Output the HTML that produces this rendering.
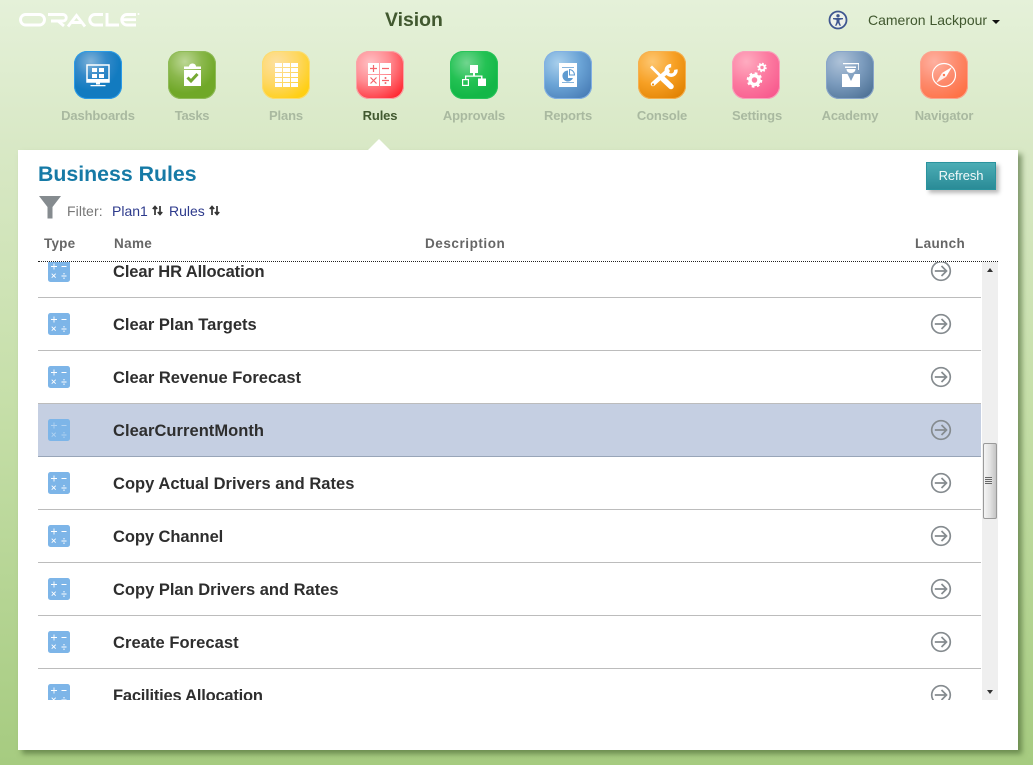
<!DOCTYPE html>
<html><head><meta charset="utf-8">
<style>
html,body{margin:0;padding:0}
body{width:1033px;height:765px;overflow:hidden;position:relative;font-family:"Liberation Sans",Arial,sans-serif;background:linear-gradient(#e5f1d9 0,#d8e8c5 150px,#c6dfa9 400px,#a6cb80 765px)}
.abs{position:absolute;white-space:nowrap}
.ic{position:absolute;top:51px;width:48px;height:48px;border-radius:13px;overflow:hidden}
.ic svg{position:absolute;left:0;top:0}
.lb{position:absolute;top:108px;width:94px;text-align:center;font-size:13px;font-weight:bold;color:#a9b9a0;letter-spacing:-.15px;line-height:15px}
#panel{position:absolute;left:18px;top:150px;width:1000px;height:600px;background:#fff;box-shadow:4px 4px 5px rgba(60,90,40,.55)}
.th{position:absolute;top:236px;font-size:13.5px;font-weight:bold;color:#666;line-height:15px;letter-spacing:.2px}
#clip{position:absolute;left:38px;top:262px;width:944px;height:438px;overflow:hidden}
.row{position:absolute;left:0;width:943px;height:52px;border-bottom:1px solid #bcbcbc}
.row.sel{background:#c5cfe2;border-bottom-color:#98a5b8}
.row .n{position:absolute;left:75px;top:17px;font-size:16.500px;font-weight:bold;color:#2e2e2e;line-height:20px;letter-spacing:0;white-space:nowrap}
.row svg.t{position:absolute;left:10px;top:15px}
.row svg.a{position:absolute;left:892px;top:15px}
</style></head>
<body>
<svg class="abs" style="left:19px;top:12px" width="122" height="16" viewBox="0 0 122 16">
<g fill="none" stroke="#fff" stroke-width="2.900">
<rect x="1.500" y="2.500" width="24" height="10.500" rx="5.200"/>
<path d="M29 2.500H44a3 3 0 0 1 0 6.500H32M39 9l6 5"/>
<path d="M49 14.500L57.500 3.500l8.500 11M53 10.500h9"/>
<path d="M84 2.500H76a5.200 5.200 0 0 0 0 10.500h8"/>
<path d="M88 1V13H100"/>
<path d="M117 2.500H108a5.200 5.200 0 0 0 0 10.500h9M104 7.700h13"/>
</g>
<circle cx="119.500" cy="2" r="1" fill="#fff"/>
</svg>
<div class="abs" style="left:385px;top:9px;font-size:19.400px;font-weight:bold;color:#41582f;line-height:23px">Vision</div>
<svg class="abs" style="left:828px;top:10px" width="20" height="20" viewBox="0 0 20 20">
<circle cx="10" cy="10" r="8.500" fill="#eef2ea" stroke="#3f5790" stroke-width="1.800"/>
<circle cx="10" cy="5.800" r="1.700" fill="#3f5790"/>
<path d="M5 8h10v1.300l-3.500.6V12l1.500 3.800h-1.500L10 12.800 8.500 15.800H7L8.500 12V9.900L5 9.300z" fill="#3f5790"/>
</svg>
<div class="abs" style="left:868px;top:12px;font-size:14px;color:#41582f;line-height:16px">Cameron Lackpour</div>
<div class="abs" style="left:992px;top:20px;width:0;height:0;border:4px solid transparent;border-top:4px solid #111;border-bottom:0"></div>

<!-- Dashboards -->
<div class="ic" style="left:74px;background:radial-gradient(circle at 35% 22%,#7fb2d8 0,#3389c9 32%,#127bc0 60%);box-shadow:inset 0 0 0 1px #2a9be8">
<svg width="48" height="48"><rect x="13" y="14" width="22" height="17" fill="none" stroke="#fff" stroke-width="1.500"/><rect x="12.500" y="28" width="23" height="3" fill="#fff"/><path d="M18 17h5v4h-5zM25 17h5v4h-5zM18 23h5v4h-5zM25 23h5v4h-5zM22 31h4v2.500h-4zM16.500 34h15v1.200h-15z" fill="#fff"/></svg></div>
<!-- Tasks -->
<div class="ic" style="left:168px;background:radial-gradient(circle at 35% 22%,#bcd795 0,#8bb84d 35%,#70a828 65%);box-shadow:inset 0 0 0 1px #8fbb58">
<svg width="48" height="48"><path d="M16 15.500h17v2.500H16zM16 19h17v16H16zM21 15.500c0-2 2-3 3.500-3s3.500 1 3.500 3z" fill="#fff"/><path d="M19.500 26.500l3.500 3.500 6.500-7" fill="none" stroke="#75a932" stroke-width="3"/></svg></div>
<!-- Plans -->
<div class="ic" style="left:262px;background:radial-gradient(circle at 30% 25%,#fde0a0 0,#fed760 45%,#ffcf14 80%);box-shadow:inset 0 0 0 1px #fbdc70">
<svg width="48" height="48"><path fill="#fff" d="M13 12h7v4h-7zM21 12h7v4h-7zM29 12h7v4h-7zM13 17h7v4h-7zM21 17h7v4h-7zM29 17h7v4h-7zM13 22h7v4h-7zM21 22h7v4h-7zM29 22h7v4h-7zM13 27h7v4h-7zM21 27h7v4h-7zM29 27h7v4h-7zM13 32h7v4h-7zM21 32h7v4h-7zM29 32h7v4h-7z"/></svg></div>
<!-- Rules -->
<div class="ic" style="left:356px;background:radial-gradient(circle at 30% 25%,#ffc0c4 0,#ff8a90 40%,#ff2a33 85%);box-shadow:inset 0 0 0 1px #f9a5a9">
<svg width="48" height="48"><path fill="#fff" d="M12 12h11v11H12zM24 12h11v11H24zM12 24h11v11H12zM24 24h11v11H24z"/><path d="M14 17.500h7M17.500 14v7M26 17.500h7M14.500 26.500l6 6M20.500 26.500l-6 6M26 29.500h7" stroke="#f4656c" stroke-width="1.200" fill="none"/><circle cx="29.500" cy="27" r="1" fill="#f4656c"/><circle cx="29.500" cy="32" r="1" fill="#f4656c"/></svg></div>
<!-- Approvals -->
<div class="ic" style="left:450px;background:radial-gradient(circle at 35% 25%,#71d58f 0,#24c254 40%,#13b747 70%);box-shadow:inset 0 0 0 1px #28c45a">
<svg width="48" height="48"><path fill="#fff" d="M20 14h8v8h-8zM23 22h2v3h-2zM15 24.500h17.500v1.300H15zM15 25.800h1.300v2.500H15zM31 25.800h1.500v2H31zM28 27.500h8V35h-8z"/><rect x="12.600" y="28.600" width="5.800" height="5.800" fill="none" stroke="#fff" stroke-width="1.200"/></svg></div>
<!-- Reports -->
<div class="ic" style="left:544px;background:radial-gradient(circle at 30% 25%,#a8cfec 0,#6ba4d6 45%,#4a7fb8 85%);box-shadow:inset 0 0 0 1px #82b0e4">
<svg width="48" height="48"><rect x="15" y="12" width="18" height="24" fill="#fff"/><path d="M18 16h12v.800H18zM18 31h12v.800H18z" fill="#5f9bd0"/><path d="M24 19.500a5.500 5.500 0 1 0 5 7.500h-5z" fill="#5f9bd0"/><path d="M25.500 18.500a5.500 5.500 0 0 1 5 5.500h-5z" fill="none" stroke="#5f9bd0"/></svg></div>
<!-- Console -->
<div class="ic" style="left:638px;background:radial-gradient(circle at 30% 22%,#fdc670 0,#f7a024 45%,#df8000 90%);box-shadow:inset 0 0 0 1px #f5b050">
<svg width="48" height="48"><path d="M13 15.500L25 27.500" stroke="#fff" stroke-width="2.800" fill="none"/><path d="M25 28L33 35.500" stroke="#fff" stroke-width="5.500" fill="none" stroke-linecap="round"/><path d="M29.500 20L15 33" stroke="#fff" stroke-width="4.500" stroke-linecap="round"/><circle cx="15" cy="33.500" r="1.100" fill="#ec8f10"/><path d="M34 15a4.800 4.800 0 1 0 3.500 5" fill="none" stroke="#fff" stroke-width="3.500" transform="rotate(-15 32 18)"/></svg></div>
<!-- Settings -->
<div class="ic" style="left:732px;background:radial-gradient(circle at 30% 22%,#feacc0 0,#fc7aa0 45%,#f85a8e 85%);box-shadow:inset 0 0 0 1px #f9a0bc">
<svg width="48" height="48"><g fill="none" stroke="#fff"><circle cx="22.500" cy="29" r="4.500" stroke-width="3.500"/><circle cx="22.500" cy="29" r="6.800" stroke-width="2" stroke-dasharray="2.700 2.640"/><circle cx="30" cy="16.500" r="2.700" stroke-width="2"/><circle cx="30" cy="16.500" r="4" stroke-width="1.500" stroke-dasharray="1.600 1.540"/></g></svg></div>
<!-- Academy -->
<div class="ic" style="left:826px;background:radial-gradient(circle at 30% 22%,#aec2d8 0,#7b9bbd 45%,#4c7094 90%);box-shadow:inset 0 0 0 1px #88a5ca">
<svg width="48" height="48"><path fill="#fff" d="M17 12h16v1.300H17zM19 15.500h11v1.500H19zM32 13h.800v6H32zM20.500 18h9c0 2.500-2 4-4.500 4s-4.500-1.500-4.500-4zM16 23h5.500L25 30l3.500-7H34v13H16z"/></svg></div>
<!-- Navigator -->
<div class="ic" style="left:920px;background:radial-gradient(circle at 30% 22%,#feb0a0 0,#fd8a6c 45%,#fe6d3f 90%);box-shadow:inset 0 0 0 1px #fba590">
<svg width="48" height="48"><circle cx="24" cy="24" r="11.500" fill="none" stroke="#fff" stroke-width="1.200"/><path d="M32 16L26 26 22 22z" fill="#fff"/><path d="M16 32l6-10 4 4z" fill="#fff" opacity=".85"/><circle cx="24" cy="24" r="1.200" fill="#fe7a55"/></svg></div>

<div class="lb" style="left:51px">Dashboards</div>
<div class="lb" style="left:145px;letter-spacing:-.3px">Tasks</div>
<div class="lb" style="left:239px">Plans</div>
<div class="lb" style="left:333px;color:#41582f">Rules</div>
<div class="lb" style="left:427px">Approvals</div>
<div class="lb" style="left:521px">Reports</div>
<div class="lb" style="left:615px">Console</div>
<div class="lb" style="left:710px">Settings</div>
<div class="lb" style="left:803px">Academy</div>
<div class="lb" style="left:897px">Navigator</div>

<div id="panel"></div>
<div class="abs" style="left:367px;top:139px;width:0;height:0;border-left:12px solid transparent;border-right:12px solid transparent;border-bottom:12px solid #fff"></div>

<div class="abs" style="left:38px;top:161px;font-size:21.300px;font-weight:bold;color:#167aa6;line-height:26px">Business Rules</div>
<div class="abs" style="left:926px;top:162px;width:70px;height:28px;box-sizing:border-box;background:linear-gradient(#4cadb5,#2a8b97);border:1px solid #2a939e;box-shadow:3px 3px 4px rgba(0,0,0,.28);color:#f2fafa;font-size:13px;text-align:center;line-height:26px;letter-spacing:-.1px">Refresh</div>

<svg class="abs" style="left:38px;top:196px" width="24" height="23" viewBox="0 0 24 23"><path d="M1 0H23L14.500 11V22.500H9.500V11z" fill="#858b8f"/></svg>
<div class="abs" style="left:67px;top:204px;font-size:14px;color:#777;line-height:15px;letter-spacing:.1px">Filter:</div>
<div class="abs" style="left:112px;top:204px;font-size:14px;color:#2d3a8c;line-height:15px">Plan1</div>
<div class="abs" style="left:169px;top:204px;font-size:14px;color:#2d3a8c;line-height:15px">Rules</div>
<svg class="abs" style="left:152px;top:205px" width="11" height="11" viewBox="0 0 11 11"><path d="M3 10V2M.8 4L3 1.500 5.200 4M8 1v8M5.800 7L8 9.500 10.200 7" fill="none" stroke="#333" stroke-width="1.700"/></svg>
<svg class="abs" style="left:209px;top:205px" width="11" height="11" viewBox="0 0 11 11"><path d="M3 10V2M.8 4L3 1.500 5.200 4M8 1v8M5.800 7L8 9.500 10.200 7" fill="none" stroke="#333" stroke-width="1.700"/></svg>

<div class="th" style="left:44px">Type</div>
<div class="th" style="left:114px;letter-spacing:.35px">Name</div>
<div class="th" style="left:425px;letter-spacing:.55px">Description</div>
<div class="th" style="left:915px;letter-spacing:.35px">Launch</div>
<div class="abs" style="left:38px;top:261px;width:960px;height:0;border-top:1px dotted #222"></div>

<svg width="0" height="0" style="position:absolute"><defs>
<g id="ty"><rect width="22" height="22" rx="2.500" fill="#7db5e8"/><path d="M3 6.500h6M6 3.500v6M13.500 6.500h5M3.700 13.700l4 4M7.700 13.700l-4 4M13.500 16h5" stroke="#fff" stroke-width=".9" fill="none"/><circle cx="16" cy="13.800" r=".7" fill="#fff"/><circle cx="16" cy="18.200" r=".7" fill="#fff"/></g>
<g id="ty2"><rect width="22" height="22" rx="2.500" fill="#7db5e8"/><g opacity=".4"><path d="M3 6.500h6M6 3.500v6M13.500 6.500h5M3.700 13.700l4 4M7.700 13.700l-4 4M13.500 16h5" stroke="#fff" stroke-width=".9" fill="none"/><circle cx="16" cy="13.800" r=".7" fill="#fff"/><circle cx="16" cy="18.200" r=".7" fill="#fff"/></g></g>
<g id="ar"><circle cx="11" cy="11" r="9.300" fill="none" stroke="#858b8f" stroke-width="1.700"/><path d="M4.800 11H16.500M11.500 6l5 5-5 5" fill="none" stroke="#858b8f" stroke-width="1.700"/></g>
</defs></svg>

<div id="clip">
<div class="row" style="top:-17px"><svg class="t" width="22" height="22"><use href="#ty"/></svg><div class="n" style="letter-spacing:-.1px">Clear HR Allocation</div><svg class="a" width="22" height="22"><use href="#ar"/></svg></div>
<div class="row" style="top:36px"><svg class="t" width="22" height="22"><use href="#ty"/></svg><div class="n">Clear Plan Targets</div><svg class="a" width="22" height="22"><use href="#ar"/></svg></div>
<div class="row" style="top:89px"><svg class="t" width="22" height="22"><use href="#ty"/></svg><div class="n">Clear Revenue Forecast</div><svg class="a" width="22" height="22"><use href="#ar"/></svg></div>
<div class="row sel" style="top:142px"><svg class="t" width="22" height="22"><use href="#ty2"/></svg><div class="n" style="letter-spacing:.04px">ClearCurrentMonth</div><svg class="a" width="22" height="22"><use href="#ar"/></svg></div>
<div class="row" style="top:195px"><svg class="t" width="22" height="22"><use href="#ty"/></svg><div class="n" style="letter-spacing:.03px">Copy Actual Drivers and Rates</div><svg class="a" width="22" height="22"><use href="#ar"/></svg></div>
<div class="row" style="top:248px"><svg class="t" width="22" height="22"><use href="#ty"/></svg><div class="n" style="letter-spacing:-.06px">Copy Channel</div><svg class="a" width="22" height="22"><use href="#ar"/></svg></div>
<div class="row" style="top:301px"><svg class="t" width="22" height="22"><use href="#ty"/></svg><div class="n">Copy Plan Drivers and Rates</div><svg class="a" width="22" height="22"><use href="#ar"/></svg></div>
<div class="row" style="top:354px"><svg class="t" width="22" height="22"><use href="#ty"/></svg><div class="n" style="letter-spacing:.06px">Create Forecast</div><svg class="a" width="22" height="22"><use href="#ar"/></svg></div>
<div class="row" style="top:407px"><svg class="t" width="22" height="22"><use href="#ty"/></svg><div class="n" style="letter-spacing:-.22px">Facilities Allocation</div><svg class="a" width="22" height="22"><use href="#ar"/></svg></div>
</div>

<!-- scrollbar -->
<div class="abs" style="left:982px;top:262px;width:16px;height:438px;background:#efefef"></div>
<div class="abs" style="left:987px;top:268px;width:0;height:0;border-left:3.500px solid transparent;border-right:3.500px solid transparent;border-bottom:4px solid #333"></div>
<div class="abs" style="left:987px;top:690px;width:0;height:0;border-left:3.500px solid transparent;border-right:3.500px solid transparent;border-top:4px solid #333"></div>
<div class="abs" style="left:983px;top:443px;width:14px;height:76px;box-sizing:border-box;background:linear-gradient(90deg,#f4f4f4,#e2e2e2 50%,#c4c4c4);border:1px solid #9a9a9a;border-radius:2px"></div>
<div class="abs" style="left:985px;top:477px;width:7px;height:7px;background:repeating-linear-gradient(#666 0,#666 1px,#e8e8e8 1px,#e8e8e8 2px)"></div>
</body></html>
